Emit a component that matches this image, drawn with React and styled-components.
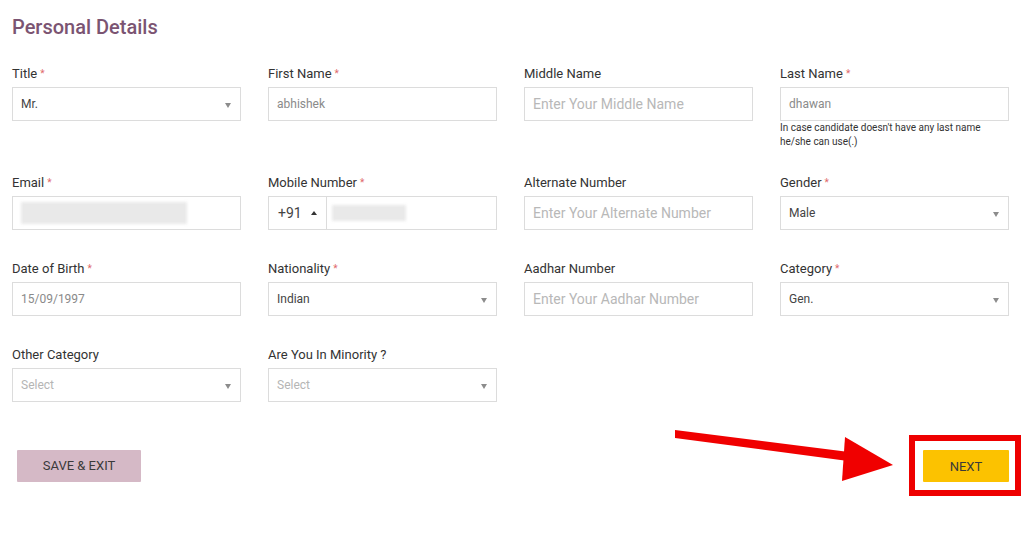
import React from "react";
import styled, { createGlobalStyle } from "styled-components";

const Global = createGlobalStyle`
  html, body { margin: 0; padding: 0; background: #fff; }
  body { font-family: Roboto, "Liberation Sans", Arial, sans-serif; color: #333; }
  * { box-sizing: border-box; }
`;

const Page = styled.div`
  position: relative;
  width: 1021px;
  height: 533px;
  padding: 15px 12px 0 12px;
  overflow: hidden;
`;

const Heading = styled.h2`
  margin: 0;
  font-size: 20px;
  line-height: 24px;
  font-weight: 500;
  color: #7b5472;
`;

const Grid = styled.div`
  display: grid;
  grid-template-columns: repeat(4, 229px);
  column-gap: 27px;
  row-gap: 31px;
  margin-top: 27px;
  align-items: start;
`;

const Field = styled.div`
  display: flex;
  flex-direction: column;
`;

const Label = styled.label`
  display: block;
  height: 15px;
  font-size: 13px;
  line-height: 15px;
  color: #333;
  margin-bottom: 6px;
`;

const Req = styled.span`
  color: #e06a6a;
  font-size: 10px;
  line-height: 0;
  margin-left: 3px;
  vertical-align: baseline;
  position: relative;
  top: -1px;
`;

const Box = styled.div`
  position: relative;
  height: 34px;
  border: 1px solid #dcdcdc;
  display: flex;
  align-items: center;
  padding: 0 8px;
  font-size: ${(p) => (p.$placeholder ? "14px" : "12px")};
  color: ${(p) => (p.$placeholder ? "#b8b8b8" : p.$muted ? "#8a8a8a" : "#444")};
  background: #fff;
`;

const Caret = styled.span`
  position: absolute;
  right: 9px;
  top: 15px;
  width: 0;
  height: 0;
  border-left: 3.5px solid transparent;
  border-right: 3.5px solid transparent;
  border-top: 5px solid #8c8c8c;
`;

const Helper = styled.div`
  font-size: 10px;
  line-height: 14px;
  color: #333;
  margin-bottom: -5px;
`;

const Blur = styled.div`
  height: ${(p) => p.$h}px;
  width: ${(p) => p.$w}px;
  background: #e9e9e9;
  filter: blur(1.5px);
`;

const PhoneBox = styled.div`
  height: 34px;
  border: 1px solid #dcdcdc;
  display: flex;
  align-items: stretch;
`;

const Dial = styled.div`
  width: 58px;
  border-right: 1px solid #dcdcdc;
  display: flex;
  align-items: center;
  padding-left: 9px;
  gap: 9px;
  font-size: 14px;
  color: #444;
`;

const UpCaret = styled.span`
  width: 0;
  height: 0;
  border-left: 3.5px solid transparent;
  border-right: 3.5px solid transparent;
  border-bottom: 4px solid #333;
`;

const PhoneInput = styled.div`
  flex: 1;
  display: flex;
  align-items: center;
  padding-left: 5px;
`;

const Actions = styled.div`
  display: flex;
  justify-content: space-between;
  align-items: center;
  margin-top: 33px;
  margin-right: -12px;
`;

const Button = styled.button`
  height: 32px;
  width: ${(p) => p.$w}px;
  border: none;
  border-radius: 1px;
  font-family: Roboto, "Liberation Sans", Arial, sans-serif;
  font-size: 13px;
  text-transform: uppercase;
  color: #3a3a3a;
  background: ${(p) => p.$bg};
  margin-left: ${(p) => p.$ml || 0}px;
  cursor: pointer;
`;

const Highlight = styled.div`
  border: 6px solid #ee0000;
  padding: 9px 6px 8px 8px;
  display: flex;
`;

const ArrowSvg = styled.svg`
  position: absolute;
  left: 0;
  top: 0;
  pointer-events: none;
`;

const PlaceholderText = styled.span`
  color: #b5b5b5;
`;

const Select = ({ value, placeholder }) => (
  <Box>
    {placeholder ? <PlaceholderText>{value}</PlaceholderText> : <span>{value}</span>}
    <Caret />
  </Box>
);

const F = ({ label, req, children }) => (
  <Field>
    <Label>
      {label}
      {req && <Req>*</Req>}
    </Label>
    {children}
  </Field>
);

export default function App() {
  return (
    <>
      <Global />
      <Page>
        <Heading>Personal Details</Heading>
        <Grid>
          <F label="Title" req>
            <Select value="Mr." />
          </F>
          <F label="First Name" req>
            <Box $muted>abhishek</Box>
          </F>
          <F label="Middle Name">
            <Box $placeholder>Enter Your Middle Name</Box>
          </F>
          <F label="Last Name" req>
            <Box $muted>dhawan</Box>
            <Helper>
              In case candidate doesn't have any last name
              <br />
              he/she can use(.)
            </Helper>
          </F>

          <F label="Email" req>
            <Box>
              <Blur $w={166} $h={22} />
            </Box>
          </F>
          <F label="Mobile Number" req>
            <PhoneBox>
              <Dial>
                +91 <UpCaret />
              </Dial>
              <PhoneInput>
                <Blur $w={74} $h={16} />
              </PhoneInput>
            </PhoneBox>
          </F>
          <F label="Alternate Number">
            <Box $placeholder>Enter Your Alternate Number</Box>
          </F>
          <F label="Gender" req>
            <Select value="Male" />
          </F>

          <F label="Date of Birth" req>
            <Box $muted>15/09/1997</Box>
          </F>
          <F label="Nationality" req>
            <Select value="Indian" />
          </F>
          <F label="Aadhar Number">
            <Box $placeholder>Enter Your Aadhar Number</Box>
          </F>
          <F label="Category" req>
            <Select value="Gen." />
          </F>

          <F label="Other Category">
            <Select value="Select" placeholder />
          </F>
          <F label="Are You In Minority ?">
            <Select value="Select" placeholder />
          </F>
        </Grid>
        <Actions>
          <Button $w={124} $bg="#d5b9c6" $ml={5}>
            Save &amp; Exit
          </Button>
          <Highlight>
            <Button $w={86} $bg="#fcc200">
              Next
            </Button>
          </Highlight>
        </Actions>
        <ArrowSvg width="1021" height="533" viewBox="0 0 1021 533">
          <polygon points="675,430 675,438 848,461 849,452" fill="#f00000" />
          <polygon points="845,437 842,481 893,465" fill="#f00000" />
        </ArrowSvg>
      </Page>
    </>
  );
}
